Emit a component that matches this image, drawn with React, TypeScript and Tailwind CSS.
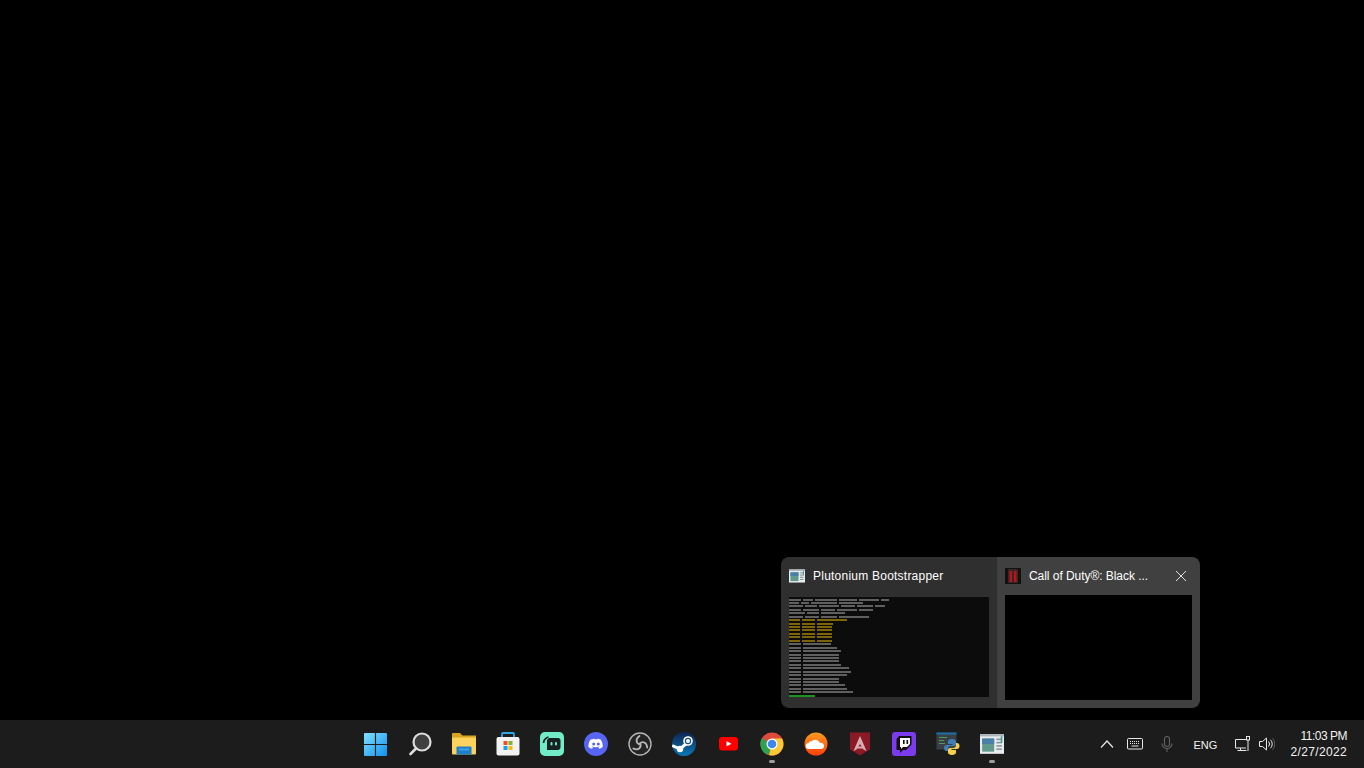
import React from 'react';

const font = 'font-["Segoe_UI","Liberation_Sans",Arial,sans-serif]';

const gray = 'bg-[#5f5f5f]';
const yellow = 'bg-[#7d6408]';
const green = 'bg-[#1f8f1f]';

// console output in the first preview, drawn as word blocks: [word widths, colour]
const consoleLines: [number[], string][] = [
  [[12, 10, 22, 18, 20, 8], gray],
  [[10, 8, 26, 24], gray],
  [[14, 12, 20, 14, 16, 10], gray],
  [[12, 16, 14, 20, 14], gray],
  [[16, 12, 24], gray],
  [[14, 14, 16, 30], gray],
  [[11, 13, 30], yellow],
  [[11, 13, 16], yellow],
  [[11, 13, 15], yellow],
  [[11, 13, 15], yellow],
  [[11, 13, 15], yellow],
  [[11, 13, 15], yellow],
  [[11, 13, 15], yellow],
  [[12, 28], gray],
  [[12, 34], gray],
  [[12, 38], gray],
  [[12, 36], gray],
  [[12, 36], gray],
  [[12, 36], gray],
  [[12, 38], gray],
  [[12, 46], gray],
  [[12, 48], gray],
  [[12, 44], gray],
  [[12, 36], gray],
  [[12, 36], gray],
  [[12, 42], gray],
  [[12, 44], gray],
  [[12, 50], gray],
  [[26], green],
];

const ConsoleIcon = ({ size = 16 }: { size?: number }) => (
  <svg width={size} height={size} viewBox="0 0 22 20">
    <rect x="0" y="1" width="22" height="18" fill="#e8ecee" />
    <rect x="0" y="1" width="22" height="2" fill="#aab4ba" />
    <rect x="2" y="5" width="11" height="12" fill="#5f9a8c" />
    <rect x="2" y="5" width="11" height="5" fill="#4a7fa8" />
    <rect x="15" y="5" width="5" height="1.5" fill="#8a979c" />
    <rect x="15" y="8" width="5" height="1.5" fill="#8a979c" />
    <rect x="15" y="11" width="5" height="1.5" fill="#8a979c" />
    <rect x="15" y="14" width="5" height="1.5" fill="#8a979c" />
    <rect x="19" y="3" width="1.5" height="6" fill="#3f9f8f" />
  </svg>
);

const Slot = ({ children, active }: { children: React.ReactNode; active?: boolean }) => (
  <div className="relative w-11 h-12 flex items-center justify-center">
    {children}
    {active && <div className="absolute bottom-[5px] left-[19px] w-[6px] h-[3px] rounded-full bg-[#9e9e9e]" />}
  </div>
);

const TaskIcons = () => (
  <div className="flex">
    <Slot>
      <svg className="mr-[1px]" width="23" height="23" viewBox="0 0 24 24">
        <defs>
          <linearGradient id="win" x1="0" y1="0" x2="1" y2="1">
            <stop offset="0" stopColor="#82e2ff" />
            <stop offset="1" stopColor="#0f8fee" />
          </linearGradient>
        </defs>
        <path d="M0 1a1 1 0 0 1 1-1h10.400v11.400H0zM12.600 0H23a1 1 0 0 1 1 1v10.400H12.600zM0 12.600h11.400V24H1a1 1 0 0 1-1-1zM12.600 12.600H24V23a1 1 0 0 1-1 1H12.600z" fill="url(#win)" />
      </svg>
    </Slot>
    <Slot>
      <svg width="24" height="24" viewBox="0 0 24 24">
        <circle cx="14" cy="10" r="8.500" fill="#3f3f3f" stroke="#dcdcdc" strokeWidth="2.200" />
        <path d="M8 16.500 2.500 22" stroke="#dcdcdc" strokeWidth="2.600" strokeLinecap="round" />
      </svg>
    </Slot>
    <Slot>
      <svg width="24" height="24" viewBox="0 0 24 24">
        <path d="M0 2a1 1 0 0 1 1-1h7l2.500 2.500H24v3H0z" fill="#d9a520" />
        <path d="M0 5.500h24v16a1 1 0 0 1-1 1H1a1 1 0 0 1-1-1z" fill="#fbd25c" />
        <path d="M4.500 15.500a1 1 0 0 1 1-1h13a1 1 0 0 1 1 1v7h-15z" fill="#1f7fc9" />
        <rect x="7" y="16.500" width="10" height="2" fill="#3fa0e8" />
      </svg>
    </Slot>
    <Slot>
      <svg width="24" height="24" viewBox="0 0 24 24">
        <path d="M6 6V2a1 1 0 0 1 1-1h10a1 1 0 0 1 1 1v4" fill="none" stroke="#2ba6e6" strokeWidth="1.800" />
        <rect x="0.500" y="5" width="23" height="18.500" rx="2" fill="#f2f2f2" />
        <rect x="7.500" y="9" width="4" height="4" fill="#e8502a" />
        <rect x="12.500" y="9" width="4" height="4" fill="#7cb82f" />
        <rect x="7.500" y="14" width="4" height="4" fill="#1aa1e8" />
        <rect x="12.500" y="14" width="4" height="4" fill="#fbb813" />
      </svg>
    </Slot>
    <Slot>
      <svg width="24" height="24" viewBox="0 0 24 24">
        <rect width="24" height="24" rx="5" fill="#72ecc6" />
        <path d="M3.500 11A7 7 0 0 1 8.500 5" fill="none" stroke="#17211f" strokeWidth="1.800" />
        <path d="M9 6h9a2.500 2.500 0 0 1 2.500 2.500V15a3 3 0 0 1-3 3H7V8z" fill="#17211f" />
        <rect x="10.500" y="10" width="2" height="3.500" rx="1" fill="#72ecc6" />
        <rect x="15" y="10" width="2" height="3.500" rx="1" fill="#72ecc6" />
      </svg>
    </Slot>
    <Slot>
      <svg width="24" height="24" viewBox="0 0 24 24">
        <circle cx="12" cy="12" r="12" fill="#5865f2" />
        <path d="M7.300 7.600c1.400-.6 2.600-.9 3.100-.9l.3.7c.8-.1 1.800-.1 2.600 0l.3-.7c.6 0 1.800.3 3.100.9 1.500 2.300 2.200 4.700 2 7.400-1.200 1-2.500 1.500-3.700 1.700l-.8-1.300 1.300-.7-.3-.2c-2.300 1.100-4.800 1.100-7.200 0l-.3.2 1.300.7-.8 1.300c-1.200-.2-2.500-.7-3.700-1.700-.2-2.700.5-5.100 2-7.400z" fill="#fff" />
        <circle cx="9.700" cy="12" r="1.500" fill="#5865f2" />
        <circle cx="14.300" cy="12" r="1.500" fill="#5865f2" />
      </svg>
    </Slot>
    <Slot>
      <svg width="24" height="24" viewBox="0 0 24 24">
        <circle cx="12" cy="12" r="11" fill="#242424" stroke="#b4b4b4" strokeWidth="1.400" />
        {[0, 120, 240].map(angle => (
          <path
            key={angle}
            transform={`rotate(${angle} 12 12)`}
            d="M12 12.500C8 11.500 7 7 11.500 4"
            fill="none"
            stroke="#b8b8b8"
            strokeWidth="1.800"
            strokeLinecap="round"
          />
        ))}
      </svg>
    </Slot>
    <Slot>
      <svg width="24" height="24" viewBox="0 0 24 24">
        <defs>
          <linearGradient id="steam" x1="0" y1="0" x2="0" y2="1">
            <stop offset="0" stopColor="#10244f" />
            <stop offset="1" stopColor="#0b78b8" />
          </linearGradient>
        </defs>
        <circle cx="12" cy="12" r="12" fill="url(#steam)" />
        <path d="M0.200 13.500 8 17l7-6" fill="none" stroke="#fff" strokeWidth="3" />
        <circle cx="8" cy="17" r="3.200" fill="#fff" />
        <circle cx="16" cy="9" r="4.800" fill="#fff" />
        <circle cx="16" cy="9" r="3.200" fill="#1a4f80" />
        <circle cx="16" cy="9" r="2" fill="#fff" />
      </svg>
    </Slot>
    <Slot>
      <svg width="24" height="24" viewBox="0 0 24 24">
        <rect x="3" y="5" width="19" height="13.500" rx="3" fill="#f00" />
        <path d="M10.500 9 15.500 11.800l-5 2.700z" fill="#fff" />
      </svg>
    </Slot>
    <Slot active>
      <svg width="24" height="24" viewBox="0 0 24 24">
        <circle cx="12" cy="12" r="11.500" fill="#de4a3c" />
        <path d="M12 12 1.900 6.200A11.500 11.500 0 0 0 9 23.100z" fill="#2fa24f" />
        <path d="M12 12 9 23.100A11.500 11.500 0 0 0 23.500 12 11.500 11.500 0 0 0 22 6.500H12z" fill="#fcc934" />
        <circle cx="12" cy="12" r="5.500" fill="#fff" />
        <circle cx="12" cy="12" r="4.300" fill="#3f87f0" />
      </svg>
    </Slot>
    <Slot>
      <svg width="24" height="24" viewBox="0 0 24 24">
        <defs>
          <linearGradient id="cloud" x1="0" y1="0" x2="0" y2="1">
            <stop offset="0" stopColor="#ff9a1e" />
            <stop offset="1" stopColor="#ff3f0a" />
          </linearGradient>
        </defs>
        <circle cx="12" cy="12" r="11.500" fill="url(#cloud)" />
        <path d="M5 17a3 3 0 0 1-.5-6 2.500 2.500 0 0 1 3-1.500A5 5 0 0 1 16 11a3 3 0 0 1 1.800 6z" fill="#fff" />
      </svg>
    </Slot>
    <Slot>
      <svg width="24" height="24" viewBox="0 0 24 24">
        <path d="M2 0.500h20v17l-10 6-10-6z" fill="#8c1a26" />
        <path d="M12 4 5.500 19l3-1.500L12 12l3.500 5.500 3 1.500z" fill="#d8aeb2" />
        <path d="M9.500 14.500h5l1 2h-7z" fill="#d8aeb2" />
      </svg>
    </Slot>
    <Slot>
      <svg width="24" height="24" viewBox="0 0 24 24">
        <rect width="24" height="24" rx="3" fill="#7c3aed" />
        <path d="M7 4 4.500 7v11H8v3l3-3h3l5.500-5.500V4z" fill="#111" />
        <path d="M8 6h10v6l-3 3h-4l-2 2v-2H8z" fill="#fff" />
        <rect x="11" y="8" width="1.600" height="4" fill="#111" />
        <rect x="14.500" y="8" width="1.600" height="4" fill="#111" />
      </svg>
    </Slot>
    <Slot>
      <svg width="24" height="24" viewBox="0 0 24 24">
        <rect x="0.500" y="0.500" width="20" height="17" fill="#3b4047" />
        <rect x="0.500" y="0.500" width="20" height="2" fill="#1b6fa8" />
        <rect x="3" y="5" width="8" height="1" fill="#4f9a5a" />
        <rect x="3" y="8" width="5" height="1" fill="#4f9a5a" />
        <rect x="3" y="11" width="6" height="1" fill="#4f9a5a" />
        <path d="M16 7c-2.500 0-4 1-4 2.500V12h4.500v1H10.500C9 13 8 14.200 8 16s1 3 2.500 3H12v-2.500c0-1.500 1.300-2.500 2.800-2.500h3.200c1.200 0 2-1 2-2V9.500C20 8 18.500 7 16 7z" fill="#3f7fb5" />
        <path d="M16 23c2.500 0 4-1 4-2.500V18h-4.500v-1H21c1.500 0 2.500-1.200 2.500-3s-1-3-2.500-3h-1v2.500c0 1.500-1.300 2.500-2.800 2.500H14c-1.200 0-2 1-2 2v2.500c0 1.500 1.500 2.500 4 2.500z" fill="#f6d04d" />
      </svg>
    </Slot>
    <Slot active>
      <ConsoleIcon size={24} />
    </Slot>
  </div>
);

const Tray = () => (
  <div className="flex items-center text-[#f2f2f2]">
    <svg className="mr-[13px]" width="14" height="10" viewBox="0 0 14 10" fill="none" stroke="#e8e8e8" strokeWidth="1.200">
      <path d="M1 8.500 7 2l6 6.500" />
    </svg>
    <svg className="mr-[18px]" width="16" height="12" viewBox="0 0 16 12" fill="none" stroke="#e8e8e8">
      <rect x="0.500" y="0.500" width="15" height="10.500" rx="1" />
      <path d="M3 3.500h10M3 5.500h10" strokeDasharray="1 1" />
      <path d="M4.500 8h7" />
    </svg>
    <svg className="mr-[20px]" width="12" height="16" viewBox="0 0 12 16" fill="none" stroke="#626262" strokeWidth="1.100">
      <rect x="3.500" y="0.500" width="5" height="10" rx="2.500" />
      <path d="M1 7.500a5 5 0 0 0 10 0M6 12.500V16" />
    </svg>
    <span className="mr-[18px] w-[24px] pt-[2px] text-[11px] leading-none whitespace-nowrap">ENG</span>
    <svg className="mr-[8px]" width="16" height="16" viewBox="0 0 16 16" fill="none" stroke="#e8e8e8">
      <path d="M11 3.500H.5v8.500H11M5.500 12v2.500M2.500 14.500h9" />
      <rect x="11.500" y="0.500" width="3" height="3.500" />
      <path d="M13 4v11" />
    </svg>
    <svg className="mr-[15px]" width="16" height="14" viewBox="0 0 16 14" fill="none" stroke="#e8e8e8">
      <path d="M.5 4.500h3L7.500 1v12L3.500 9.500h-3z" />
      <path d="M9.500 4.500a3.500 3.500 0 0 1 0 5M11.500 2.800a6 6 0 0 1 0 8.400" />
      <path d="M13.500 1.200a8.500 8.500 0 0 1 0 11.600" stroke="#5c5c5c" />
    </svg>
    <div className="flex flex-col items-end text-[12px] leading-[16px] pr-[17px]">
      <span className="tracking-[-0.5px]">11:03 PM</span>
      <span className="tracking-[0.35px]">2/27/2022</span>
    </div>
  </div>
);

const App: React.FC = () => {
  return (
    <div className={`w-[1364px] h-[768px] bg-black flex flex-col overflow-hidden ${font}`}>
      <div className="flex-1 flex items-end pl-[781px] pb-[12px]">
        <div className="flex w-[419px] h-[151px] rounded-lg overflow-hidden text-white">
          {/* inactive preview */}
          <div className="w-[216px] bg-[#2f2f2f] pl-[8px] flex flex-col">
            <div className="h-[38px] flex items-center gap-[8px]">
              <ConsoleIcon />
              <span className="text-[12px] tracking-[0.23px]">Plutonium Bootstrapper</span>
            </div>
            <div className="w-[200px] h-[100px] mt-[2px] bg-[#0c0c0c] pt-[1.500px] flex flex-col gap-[1.450px]">
              {consoleLines.map(([words, color], i) => (
                <div key={i} className="flex gap-[2px] h-[2px] blur-[0.4px]">
                  {words.map((width, j) => (
                    <div key={j} className={`h-[2px] ${color}`} style={{ width }} />
                  ))}
                </div>
              ))}
            </div>
          </div>
          {/* hovered preview */}
          <div className="flex-1 bg-[#404040] px-[8px] flex flex-col">
            <div className="h-[38px] flex items-center">
              <svg className="mr-[8px]" width="16" height="16" viewBox="0 0 16 16">
                <rect width="16" height="16" fill="#111" />
                <rect x="3" y="1" width="10" height="14" fill="#3a2426" />
                <rect x="4.500" y="3" width="2.500" height="11" fill="#b8141a" />
                <rect x="9" y="3" width="2.500" height="11" fill="#b8141a" />
              </svg>
              <span className="text-[12px] flex-1 tracking-[-0.05px]">Call of Duty®: Black ...</span>
              <svg className="mr-[6px]" width="10" height="10" viewBox="0 0 10 10" stroke="#e0e0e0" strokeWidth="1">
                <path d="M0 0l10 10M10 0 0 10" />
              </svg>
            </div>
            <div className="w-[187px] h-[105px] bg-black" />
          </div>
        </div>
      </div>
      <div className="h-12 bg-[#1c1c1c] flex items-center pl-[354px]">
        <TaskIcons />
        <div className="flex-1 flex justify-end">
          <Tray />
        </div>
      </div>
    </div>
  );
};

export default App;
